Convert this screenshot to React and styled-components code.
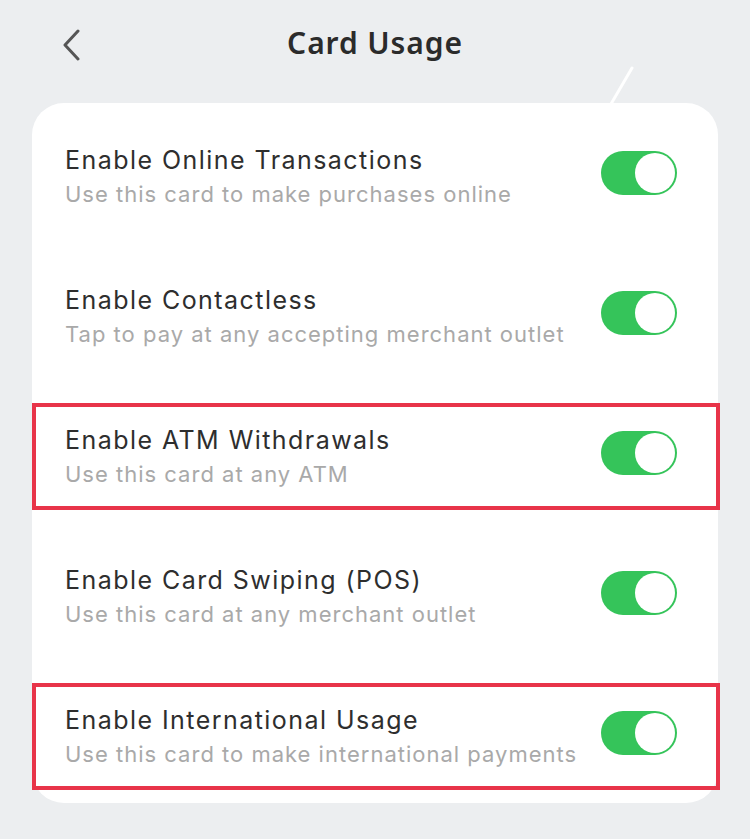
import React from "react";
import styled, { createGlobalStyle } from "styled-components";

const Global = createGlobalStyle`
  html, body {
    margin: 0;
    padding: 0;
    background: #eceef0;
  }
  body {
    font-family: "Inter", "Roboto", sans-serif;
    -webkit-font-smoothing: antialiased;
  }
`;

const Page = styled.div`
  width: 750px;
  height: 839px;
  position: relative;
  overflow: hidden;
  background: #eceef0;
`;

const Header = styled.div`
  height: 103px;
  display: grid;
  grid-template-columns: 96px 1fr 96px;
  align-items: start;
  padding-top: 23px;
  box-sizing: border-box;
`;

const Back = styled.div`
  display: flex;
  justify-content: flex-end;
  padding-right: 14px;
  padding-top: 6px;
`;

const Title = styled.h1`
  margin: 0;
  text-align: center;
  font-family: "Noto Sans", sans-serif;
  font-weight: 600;
  font-size: 30px;
  letter-spacing: 0.9px;
  color: #2b2b2b;
  line-height: 40px;
`;

const Glint = styled.svg`
  position: absolute;
  left: 605px;
  top: 66px;
`;

const Card = styled.div`
  margin: 0 32px;
  background: #fff;
  border-radius: 32px;
  height: 700px;
  display: flex;
  flex-direction: column;
`;

const Row = styled.div`
  position: relative;
  height: 140px;
  display: flex;
  align-items: center;
  justify-content: space-between;
  padding: 6px 41px 0 33px;
  box-sizing: border-box;
`;

const Texts = styled.div`
  display: flex;
  flex-direction: column;
  gap: 4px;
`;

const Label = styled.div`
  font-family: "Inter", sans-serif;
  font-size: 25px;
  color: #2e2e2e;
  line-height: 32px;
  letter-spacing: 1.45px;
`;

const Hint = styled.div`
  font-family: "Inter", sans-serif;
  font-size: 22px;
  color: #a9a9a9;
  line-height: 28px;
  letter-spacing: 1px;
`;

const Toggle = styled.div`
  width: 76px;
  height: 44px;
  border-radius: 22px;
  background: #35c45a;
  display: flex;
  align-items: center;
  justify-content: flex-end;
  padding: 2px;
  box-sizing: border-box;
  margin-top: -6px;
`;

const Knob = styled.div`
  width: 40px;
  height: 40px;
  border-radius: 50%;
  background: #fff;
`;

const Highlight = styled.div`
  position: absolute;
  left: 0;
  right: -2px;
  top: 20px;
  bottom: 13px;
  border: 4px solid #e83449;
  pointer-events: none;
`;

const items = [
  { title: "Enable Online Transactions", hint: "Use this card to make purchases online" },
  { title: "Enable Contactless", hint: "Tap to pay at any accepting merchant outlet" },
  { title: "Enable ATM Withdrawals", hint: "Use this card at any ATM", marked: true },
  { title: "Enable Card Swiping (POS)", hint: "Use this card at any merchant outlet" },
  { title: "Enable International Usage", hint: "Use this card to make international payments", marked: true },
];

export default function App() {
  return (
    <Page>
      <Global />
      <Header>
        <Back>
          <svg width="20" height="32" viewBox="0 0 20 32">
            <path d="M16 2 L3 16 L16 30" fill="none" stroke="#555" strokeWidth="3" strokeLinecap="round" strokeLinejoin="round" />
          </svg>
        </Back>
        <Title>Card Usage</Title>
        <div />
      </Header>
      <Glint width="30" height="40" viewBox="0 0 30 40">
        <path d="M27 2 L6 38" stroke="#fff" strokeWidth="3" strokeLinecap="round" />
      </Glint>
      <Card>
        {items.map((it) => (
          <Row key={it.title}>
            <Texts>
              <Label>{it.title}</Label>
              <Hint>{it.hint}</Hint>
            </Texts>
            <Toggle>
              <Knob />
            </Toggle>
            {it.marked && <Highlight />}
          </Row>
        ))}
      </Card>
    </Page>
  );
}
